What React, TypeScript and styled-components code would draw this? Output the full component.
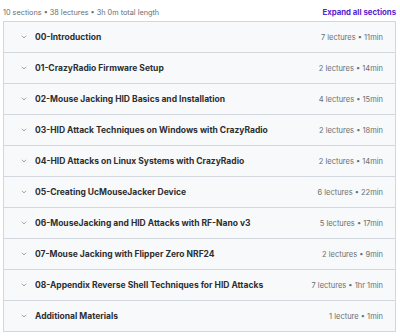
import React from "react";
import styled, { createGlobalStyle } from "styled-components";

const Global = createGlobalStyle`
  html, body { margin: 0; padding: 0; background: #ffffff; }
  body { font-family: Inter, "Noto Sans", sans-serif; -webkit-font-smoothing: antialiased; }
`;

const Page = styled.div`
  width: 400px;
  height: 336px;
  box-sizing: border-box;
  padding: 3px 4px 0 3px;
  display: flex;
  flex-direction: column;
`;

const Header = styled.div`
  height: 18px;
  display: flex;
  align-items: center;
  justify-content: space-between;
`;

const Summary = styled.span`
  font-size: 7.3px;
  color: #6a6f73;
`;

const ExpandAll = styled.button`
  border: none;
  background: none;
  padding: 0;
  font-family: inherit;
  font-size: 7.8px;
  font-weight: 700;
  color: #5624d0;
  cursor: pointer;
`;

const Panel = styled.div`
  border: 1px solid #d1d7dc;
  display: flex;
  flex-direction: column;
`;

const Row = styled.div<{ $first?: boolean }>`
  height: 30px;
  box-sizing: content-box;
  border-top: ${(p) => (p.$first ? "none" : "1px solid #d1d7dc")};
  background: #f7f9fa;
  display: flex;
  align-items: center;
  padding: 0 12px 0 17px;
`;

const Chevron = styled.svg`
  width: 6px;
  height: 6px;
  flex: none;
  margin-right: 8px;
`;

const Title = styled.span`
  flex: 1;
  font-size: 8.5px;
  font-weight: 700;
  color: #2d2f31;
  white-space: nowrap;
  overflow: hidden;
`;

const Meta = styled.span`
  font-size: 7.5px;
  color: #6a6f73;
  white-space: nowrap;
`;

const sections: [string, string][] = [
  ["00-Introduction", "7 lectures • 11min"],
  ["01-CrazyRadio Firmware Setup", "2 lectures • 14min"],
  ["02-Mouse Jacking HID Basics and Installation", "4 lectures • 15min"],
  ["03-HID Attack Techniques on Windows with CrazyRadio", "2 lectures • 18min"],
  ["04-HID Attacks on Linux Systems with CrazyRadio", "2 lectures • 14min"],
  ["05-Creating UcMouseJacker Device", "6 lectures • 22min"],
  ["06-MouseJacking and HID Attacks with RF-Nano v3", "5 lectures • 17min"],
  ["07-Mouse Jacking with Flipper Zero NRF24", "2 lectures • 9min"],
  ["08-Appendix Reverse Shell Techniques for HID Attacks", "7 lectures • 1hr 1min"],
  ["Additional Materials", "1 lecture • 1min"],
];

export default function App() {
  return (
    <Page>
      <Global />
      <Header>
        <Summary>10 sections • 38 lectures • 3h 0m total length</Summary>
        <ExpandAll>Expand all sections</ExpandAll>
      </Header>
      <Panel>
        {sections.map(([t, m], i) => (
          <Row key={t} $first={i === 0}>
            <Chevron viewBox="0 0 10 10">
              <path d="M2 3.5 L5 6.5 L8 3.5" fill="none" stroke="#6a6f73" strokeWidth="1.1" strokeLinecap="round" strokeLinejoin="round" />
            </Chevron>
            <Title>{t}</Title>
            <Meta>{m}</Meta>
          </Row>
        ))}
      </Panel>
    </Page>
  );
}
